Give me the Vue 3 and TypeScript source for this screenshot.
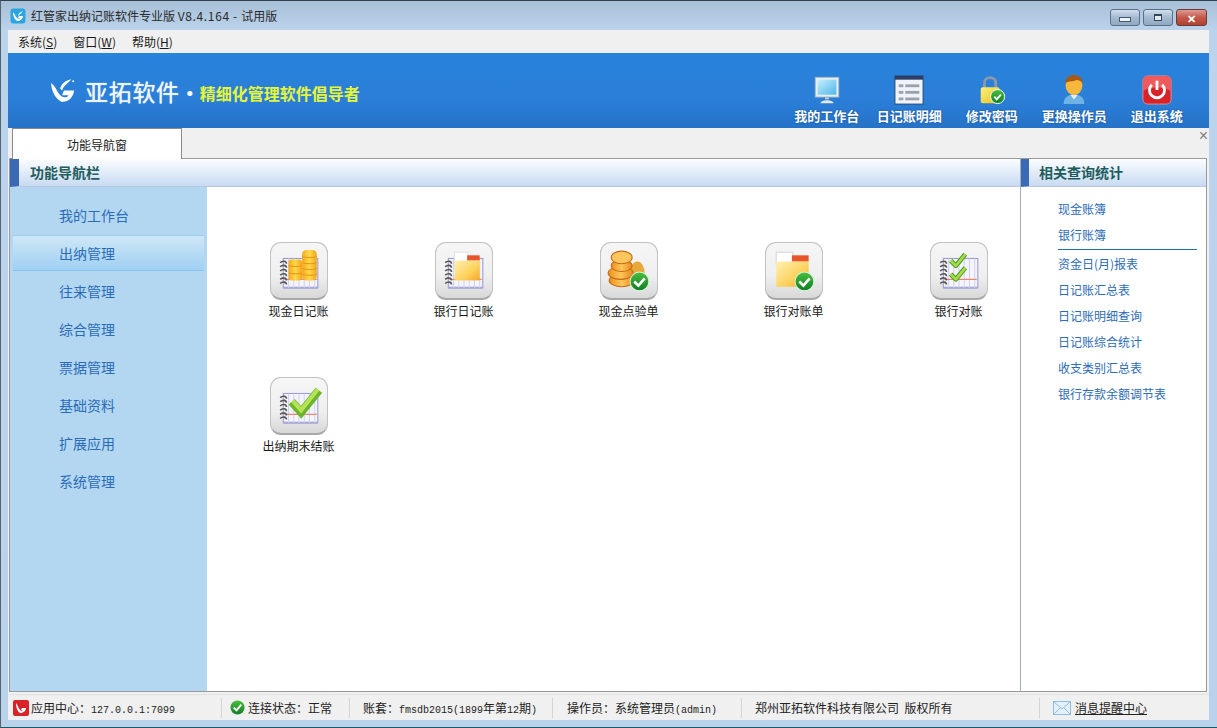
<template>
  <div class="window">
    <svg class="defs" aria-hidden="true">
      <defs>
        <linearGradient id="coin" x1="0" x2="1" y1="0" y2="0">
          <stop offset="0" stop-color="#f6a81c" />
          <stop offset="0.5" stop-color="#ffd84a" />
          <stop offset="1" stop-color="#f4a31a" />
        </linearGradient>
        <linearGradient id="coinDark" x1="0" x2="1" y1="0" y2="0">
          <stop offset="0" stop-color="#ea8f1e" />
          <stop offset="0.5" stop-color="#ffc65a" />
          <stop offset="1" stop-color="#e8871a" />
        </linearGradient>
        <linearGradient id="folder" x1="0" x2="1" y1="0" y2="1">
          <stop offset="0" stop-color="#fff0b4" />
          <stop offset="0.6" stop-color="#fdd25c" />
          <stop offset="1" stop-color="#f5a828" />
        </linearGradient>
        <linearGradient id="okBall" x1="0" x2="0" y1="0" y2="1">
          <stop offset="0" stop-color="#4ac03c" />
          <stop offset="1" stop-color="#0f7d26" />
        </linearGradient>
        <linearGradient id="screen" x1="0" x2="1" y1="0" y2="1">
          <stop offset="0" stop-color="#c6effc" />
          <stop offset="1" stop-color="#4fb6ea" />
        </linearGradient>
        <linearGradient id="padlock" x1="0" x2="1" y1="0" y2="1">
          <stop offset="0" stop-color="#fbf07a" />
          <stop offset="1" stop-color="#e9c21c" />
        </linearGradient>
      </defs>
    </svg>

    <div class="titlebar">
      <svg class="app-icon" viewBox="0 0 16 16">
        <rect x="0.5" y="0.5" width="15" height="15" rx="3" fill="#2ba6e0" />
        <path d="M3 4c0 4 1 7 4 9 3 0 6-2 6-5H9l-1 2h2c-1 1-2 1-3 0-2-2-2-4-4-6z" fill="#fff" />
        <path d="M8 8c0-2 2-4 5-5-1 2-3 3-5 5z" fill="#fff" />
      </svg>
      <span class="title-text">红管家出纳记账软件专业版 <span class="title-ver">V8.4.164 - </span>试用版</span>
      <div class="win-btns">
        <div class="win-btn"><span class="min-mark"></span></div>
        <div class="win-btn"><span class="max-mark"></span></div>
        <div class="win-btn close"><span>✕</span></div>
      </div>
    </div>

    <div class="inner">
      <div class="menubar">
        <span v-for="m in menus" :key="m.name" class="menu-item">{{ m.name }}(<u>{{ m.key }}</u>)</span>
      </div>

      <div class="banner">
        <div class="brand">
          <svg class="logo" viewBox="0 0 28 28">
            <path d="M1 6c1 9 4 16 11 20 7 1 13-4 14-12H15l-2 5h7c-2 3-5 3-8 1C7 16 7 10 1 6z" fill="#fff" />
            <path d="M11 12c1-5 6-9 12-10-3 4-8 6-10 12z" fill="#fff" />
            <circle cx="25" cy="4" r="1" fill="#fff" />
          </svg>
          <span class="brand-name">亚拓软件</span>
          <span class="brand-dot">·</span>
          <span class="slogan">精细化管理软件倡导者</span>
        </div>
        <div class="tools">
          <div v-for="t in tools" :key="t.label" class="tool">
            <svg class="tool-icon" viewBox="0 0 32 32">
              <template v-if="t.icon === 'monitor'">
                <rect x="3.500" y="2.500" width="25" height="21" fill="#e6eef4" stroke="#a9b8c2" />
                <rect x="6" y="5" width="20" height="16" fill="url(#screen)" />
                <path d="M14 24h4v2h-4z" fill="#c4ced5" />
                <path d="M9 30c1-4 13-4 14 0z" fill="#e4eaee" />
              </template>
              <template v-else-if="t.icon === 'list'">
                <rect x="1" y="1" width="30" height="30" fill="#f0f3f8" stroke="#27406e" />
                <rect x="1" y="1" width="30" height="4" fill="#2b3f66" />
                <g fill="#9aa3ad">
                  <rect x="5" y="10" width="5" height="3" /><rect x="12" y="10" width="15" height="3" />
                  <rect x="5" y="17" width="5" height="3" /><rect x="12" y="17" width="15" height="3" />
                  <rect x="5" y="24" width="5" height="3" /><rect x="12" y="24" width="15" height="3" />
                </g>
              </template>
              <template v-else-if="t.icon === 'lock'">
                <path d="M8 14V8c0-7 12-7 12 0v6" fill="none" stroke="#8d99a6" stroke-width="3" />
                <rect x="4" y="13" width="20" height="17" rx="2" fill="url(#padlock)" />
                <circle cx="22" cy="23" r="7.500" fill="url(#okBall)" stroke="#fff" />
                <path d="M18.500 23l2.500 3 4.500-5" fill="none" stroke="#fff" stroke-width="2" />
              </template>
              <template v-else-if="t.icon === 'user'">
                <path d="M5 31c0-8 5-10 11-10s11 2 11 10z" fill="#6fb2e6" />
                <path d="M12 21l4 5 4-5z" fill="#e8f2fa" />
                <ellipse cx="16" cy="11" rx="9" ry="10.500" fill="#f6b73c" />
                <path d="M6.500 9C7 2 12 0 16 0s9 2 9.500 9c-4-4-6-4-9-3-3 1-7 0-10 3z" fill="#a65a14" />
              </template>
              <template v-else>
                <rect x="1" y="1" width="30" height="30" rx="5" fill="#d8232a" stroke="#e98d8d" />
                <path d="M1 17c8-5 22-5 30 0V6a5 5 0 0 0-5-5H6a5 5 0 0 0-5 5z" fill="#ee5a5d" />
                <path d="M10.500 10.500a8 8 0 1 0 11 0" fill="none" stroke="#fff" stroke-width="3" />
                <path d="M16 6v10" stroke="#fff" stroke-width="3" />
              </template>
            </svg>
            <span class="tool-label">{{ t.label }}</span>
          </div>
        </div>
      </div>

      <div class="tabstrip">
        <div class="tab">功能导航窗</div>
        <span class="tab-close">×</span>
      </div>

      <div class="content">
        <div class="center">
          <div class="panel-head">功能导航栏</div>
          <div class="center-body">
            <nav class="nav">
              <div v-for="n in navItems" :key="n" class="nav-item" :class="{ active: n === activeNav }">{{ n }}</div>
            </nav>
            <div class="grid">
              <div v-for="item in gridItems" :key="item.label" class="grid-item">
                <div class="tile">
                  <svg class="tile-icon" viewBox="0 0 44 44">
                    <template v-if="item.icon !== 'coins' && item.icon !== 'folderCheck'">
                      <!-- notebook -->
                      <rect x="7" y="10" width="33" height="28" fill="#f4f4fc" stroke="#9a9ad0" />
                      <rect x="7" y="37" width="33" height="2" fill="#a8a8d8" />
                      <path d="M12 10v28M17 10v28M22 10v28M27 10v28M32 10v28M37 10v28" stroke="#d2d2ee" />
                      <path d="M8 30h31" stroke="#e58a6c" />
                      <g fill="none" stroke="#555" stroke-width="1.500">
                        <path d="M4 14c2-2 6-2 6 1M4 18c2-2 6-2 6 1M4 22c2-2 6-2 6 1M4 26c2-2 6-2 6 1M4 30c2-2 6-2 6 1M4 34c2-2 6-2 6 1" />
                      </g>
                    </template>
                    <template v-if="item.icon === 'coinBook'">
                      <rect x="12" y="11" width="13" height="20" rx="3" fill="url(#coin)" />
                      <rect x="25" y="2" width="14" height="29" rx="4" fill="url(#coin)" />
                      <path d="M25 8c3 1.500 11 1.500 14 0M25 14c3 1.500 11 1.500 14 0M25 19.500c3 1.500 11 1.500 14 0M25 25c3 1.500 11 1.500 14 0M12 17c3 1 10 1 13 0M12 24c3 1 10 1 13 0" fill="none" stroke="#e09a18" />
                    </template>
                    <template v-else-if="item.icon === 'folderBook'">
                      <rect x="13" y="4" width="13" height="12" fill="#fff" stroke="#e2e2e2" />
                      <rect x="25" y="7" width="12" height="5" fill="#e8552a" />
                      <path d="M13 12h24v19H13z" fill="url(#folder)" />
                    </template>
                    <template v-else-if="item.icon === 'coins'">
                      <ellipse cx="30" cy="24" rx="7" ry="11" fill="#e9a93a" />
                      <g stroke="#c46c14">
                        <ellipse cx="15" cy="31" rx="12" ry="6" fill="url(#coinDark)" />
                        <ellipse cx="14" cy="24" rx="12" ry="6" fill="url(#coinDark)" />
                        <ellipse cx="15" cy="17" rx="10" ry="5.500" fill="url(#coinDark)" />
                        <ellipse cx="15" cy="9" rx="10" ry="6" fill="#fbc65c" />
                      </g>
                      <circle cx="32" cy="32" r="9" fill="url(#okBall)" stroke="#d8f0d8" />
                      <path d="M27 32l4 4 6-7" fill="none" stroke="#fff" stroke-width="2.500" />
                    </template>
                    <template v-else-if="item.icon === 'folderCheck'">
                      <rect x="5" y="4" width="16" height="12" fill="#fff" stroke="#d4d4d4" />
                      <rect x="20" y="7" width="16" height="6" fill="#e8552a" />
                      <path d="M5 13h31v24H5z" fill="url(#folder)" />
                      <circle cx="32" cy="32" r="9" fill="url(#okBall)" stroke="#d8f0d8" />
                      <path d="M27 32l4 4 6-7" fill="none" stroke="#fff" stroke-width="2.500" />
                    </template>
                    <template v-else-if="item.icon === 'checksBook'">
                      <g fill="none" stroke-linejoin="round">
                        <path d="M14 12l5 5 9-11" stroke="#4f9e22" stroke-width="4.500" />
                        <path d="M14 12l5 5 9-11" stroke="#a6dc4a" stroke-width="2.500" />
                        <path d="M14 25l5 5 9-11" stroke="#4f9e22" stroke-width="4.500" />
                        <path d="M14 25l5 5 9-11" stroke="#a6dc4a" stroke-width="2.500" />
                      </g>
                    </template>
                    <template v-else>
                      <path d="M15 18l9 10L41 7" fill="none" stroke="#6cb52a" stroke-width="8" />
                      <path d="M16 17l8 9L40 6" fill="none" stroke="#b4e455" stroke-width="4" />
                    </template>
                  </svg>
                </div>
                <span class="grid-label">{{ item.label }}</span>
              </div>
            </div>
          </div>
        </div>
        <aside class="side">
          <div class="panel-head">相关查询统计</div>
          <div class="side-list">
            <template v-for="group in sideGroups" :key="group[0]">
              <div class="side-group">
                <a v-for="s in group" :key="s" class="side-link">{{ s }}</a>
              </div>
            </template>
          </div>
        </aside>
      </div>

      <div class="status">
        <div class="cell cell-app">
          <svg class="status-icon" viewBox="0 0 16 16">
            <rect width="16" height="16" rx="2" fill="#d8232a" />
            <path d="M3 3c0 4 1 8 4 10 3 0 6-2 6-5H9L8 10h2c-1 1-2 1-3 0-2-2-2-5-4-7z" fill="#fff" />
          </svg>
          <span>应用中心：<i class="mono">127.0.0.1:7099</i></span>
        </div>
        <div class="cell cell-conn">
          <svg class="status-icon" viewBox="0 0 16 16">
            <circle cx="8" cy="8" r="7.500" fill="url(#okBall)" />
            <path d="M4 8l3 3 5-6" fill="none" stroke="#fff" stroke-width="2" />
          </svg>
          <span>连接状态：正常</span>
        </div>
        <div class="cell cell-book"><span>账套：<i class="mono">fmsdb2015(1899</i>年第<i class="mono">12</i>期<i class="mono">)</i></span></div>
        <div class="cell cell-op"><span>操作员：系统管理员<i class="mono">(admin)</i></span></div>
        <div class="cell cell-copy"><span>郑州亚拓软件科技有限公司&nbsp;&nbsp;版权所有</span></div>
        <div class="cell cell-msg">
          <svg class="mail" viewBox="0 0 18 14">
            <rect x="0.500" y="0.500" width="17" height="13" fill="#e4f1fb" stroke="#8fbfe6" />
            <path d="M1 1l8 7 8-7M1 13l6-6M17 13l-6-6" fill="none" stroke="#8fbfe6" />
          </svg>
          <u>消息提醒中心</u>
        </div>
      </div>
    </div>
  </div>
</template>

<script setup lang="ts">
interface Tool { label: string; icon: string }
interface GridItem { label: string; icon: string }

const menus = [
  { name: '系统', key: 'S' },
  { name: '窗口', key: 'W' },
  { name: '帮助', key: 'H' }
]

const tools: Tool[] = [
  { label: '我的工作台', icon: 'monitor' },
  { label: '日记账明细', icon: 'list' },
  { label: '修改密码', icon: 'lock' },
  { label: '更换操作员', icon: 'user' },
  { label: '退出系统', icon: 'power' }
]

const activeNav = '出纳管理'
const navItems = ['我的工作台', '出纳管理', '往来管理', '综合管理', '票据管理', '基础资料', '扩展应用', '系统管理']

const gridItems: GridItem[] = [
  { label: '现金日记账', icon: 'coinBook' },
  { label: '银行日记账', icon: 'folderBook' },
  { label: '现金点验单', icon: 'coins' },
  { label: '银行对账单', icon: 'folderCheck' },
  { label: '银行对账', icon: 'checksBook' },
  { label: '出纳期末结账', icon: 'checkBook' }
]

const sideGroups = [
  ['现金账簿', '银行账簿'],
  ['资金日(月)报表', '日记账汇总表', '日记账明细查询', '日记账综合统计', '收支类别汇总表', '银行存款余额调节表']
]
</script>

<style>
html, body { margin: 0; background: #b9d1ea; overflow: hidden; }
</style>

<style scoped>
.window {
  width: 1217px;
  height: 728px;
  box-sizing: border-box;
  display: flex;
  flex-direction: column;
  position: relative;
  background: linear-gradient(#a8bfd8, #bcd3ec 30px, #b9d2ec);
  border-top: 1px solid #33414f;
  border-left: 1px solid #54636f;
  border-bottom: 1px solid #1d5a66;
  font-family: "Noto Sans CJK SC", "Liberation Sans", sans-serif;
  font-size: 12px;
  color: #1a1a1a;
  overflow: hidden;
}
.defs { position: absolute; width: 0; height: 0; }
.titlebar {
  height: 29px;
  display: flex;
  align-items: center;
  padding: 0 10px 0 9px;
  flex: none;
}
.app-icon { width: 16px; height: 16px; margin-right: 5px; }
.title-text { font-size: 12px; color: #2a2a2a; white-space: pre; }
.title-ver { letter-spacing: 0.65px; }
.win-btns { margin-left: auto; display: flex; gap: 3px; margin-top: 4px; }
.win-btn {
  width: 30px;
  height: 17px;
  border: 1px solid #58708a;
  border-radius: 3px;
  background: linear-gradient(#d0deec, #a5bad0 50%, #8fa8c2);
  display: flex;
  align-items: center;
  justify-content: center;
  box-sizing: border-box;
}
.win-btn.close {
  width: 31px;
  background: linear-gradient(#dd9a92, #c3594c 50%, #b0402f);
  border-color: #6d3a36;
  color: #fff;
  font-size: 11px;
  font-weight: bold;
}
.min-mark { width: 10px; height: 3px; margin-top: 4px; background: #eef3f8; border: 1px solid #45596d; }
.max-mark { width: 8px; height: 7px; border: 1px solid #33475a; border-top-width: 2px; box-sizing: border-box; background: #dfe7ef; }

.inner {
  flex: 1;
  min-height: 0;
  margin: 0 8px 7px 7px;
  display: flex;
  flex-direction: column;
  background: #f0f0f0;
}
.menubar {
  height: 23px;
  flex: none;
  display: flex;
  align-items: center;
  gap: 16px;
  padding-left: 10px;
  background: #f0f0f0;
}
.banner {
  height: 75px;
  flex: none;
  display: flex;
  align-items: center;
  background: linear-gradient(#2783dc, #2b7fd8 60%, #2573c8);
  padding-right: 11px;
}
.brand { display: flex; align-items: center; padding-left: 42px; }
.logo { width: 26px; height: 27px; margin-right: 9px; }
.brand-name { font-size: 23px; color: #eef6fc; letter-spacing: 0.7px; text-shadow: 0 0 1px #fff; }
.brand-dot { color: #fff; font-size: 20px; font-weight: bold; margin-top: 4px; }
.slogan { font-size: 16px; font-weight: 700; color: #e4f53a; margin-top: 4px; }
.tools { margin-left: auto; display: flex; }
.tool {
  width: 82.500px;
  display: flex;
  flex-direction: column;
  align-items: center;
  margin-top: 18px;
}
.tool-icon { width: 30px; height: 30px; }
.tool-label { font-size: 13px; font-weight: 700; color: #fff; line-height: 16px; margin-top: 3px; white-space: nowrap; text-shadow: 0 0 2px #174a86; }

.tabstrip {
  height: 30px;
  flex: none;
  position: relative;
  background: #f0f0f0;
  padding-left: 4px;
  box-sizing: border-box;
}
.tab {
  width: 170px;
  height: 31px;
  box-sizing: border-box;
  background: #fff;
  border: 1px solid #8a8a8a;
  border-bottom: none;
  text-align: center;
  line-height: 31px;
  position: relative;
  z-index: 1;
}
.tab-close { position: absolute; top: -1px; right: 1px; font-size: 16px; line-height: 18px; color: #808080; font-family: "Liberation Sans", sans-serif; }

.content {
  height: 534px;
  flex: none;
  display: flex;
  margin: 0 2px 0 1px;
  border: 1px solid #9a9a9a;
  box-sizing: border-box;
  background: #fff;
}
.center { flex: 1; display: flex; flex-direction: column; min-width: 0; }
.panel-head {
  height: 28px;
  flex: none;
  box-sizing: border-box;
  background: linear-gradient(#fbfdff, #c8daf2);
  border-left: 9px solid #3b6ab4;
  border-bottom: 1px solid #b7c9de;
  padding-left: 11px;
  font-size: 14px;
  font-weight: 700;
  line-height: 27px;
  color: #1f5d5d;
}
.side .panel-head { border-left-width: 8px; padding-left: 10px; }
.center-body { flex: 1; display: flex; min-height: 0; }
.nav {
  width: 197px;
  flex: none;
  background: #b3d7f1;
  padding-top: 10px;
  box-sizing: border-box;
}
.nav-item {
  height: 36px;
  margin: 0 3px 2px;
  padding-left: 46px;
  line-height: 36px;
  font-size: 14px;
  color: #2b6cb8;
  box-sizing: border-box;
}
.nav-item.active {
  background: linear-gradient(#cfe7f7, #9fd0f2);
  border-top: 1px solid #9bcdf0;
  border-bottom: 1px solid #86c2ee;
  line-height: 34px;
}
.grid {
  flex: 1;
  display: grid;
  grid-template-columns: repeat(5, 165px);
  grid-auto-rows: 135px;
  padding: 55px 0 0 9px;
  box-sizing: border-box;
}
.grid-item { display: flex; flex-direction: column; align-items: center; }
.tile {
  width: 58px;
  height: 58px;
  box-sizing: border-box;
  border: 1px solid #c2c2c2;
  border-bottom: 2px solid #a8a8a8;
  border-radius: 11px;
  background: linear-gradient(#f6f6f6, #efefef 60%, #d8d8d8);
  display: flex;
  align-items: center;
  justify-content: center;
}
.tile-icon { width: 46px; height: 46px; }
.grid-label { margin-top: 3px; line-height: 16px; white-space: nowrap; }

.side {
  width: 186px;
  flex: none;
  border-left: 1px solid #9fb0c4;
  display: flex;
  flex-direction: column;
  box-sizing: border-box;
}
.side-list { padding: 9px 0 0 37px; }
.side-group:first-child { border-bottom: 1px solid #1f6fb6; margin-right: 9px; padding-bottom: 1px; }
.side-group + .side-group { padding-top: 1px; }
.side-link { display: block; height: 26px; line-height: 26px; color: #2d6cb6; }

.status {
  flex: 1;
  min-height: 0;
  display: flex;
  align-items: center;
  background: #f0f0f0;
  margin-top: 2px;
  border-top: 1px solid #e2e2e2;
  box-sizing: border-box;
}
.cell {
  height: 20px;
  display: flex;
  align-items: center;
  box-sizing: border-box;
  border-right: 1px solid #d4d4d4;
  white-space: nowrap;
  color: #222;
}
.mono { font-family: "Liberation Mono", monospace; font-style: normal; font-size: 10px; }
.status-icon { width: 16px; height: 16px; margin-right: 2px; flex: none; }
.cell-app { width: 214px; padding-left: 5px; }
.cell-conn { width: 128px; padding-left: 8px; }
.cell-conn .status-icon { width: 15px; height: 15px; margin-right: 3px; }
.cell-book { width: 203px; padding-left: 13px; }
.cell-op { width: 189px; padding-left: 14px; }
.cell-copy { width: 298px; padding-left: 13px; }
.cell-msg { border-right: none; padding-left: 13px; }
.mail { width: 18px; height: 14px; margin-right: 4px; }
</style>
